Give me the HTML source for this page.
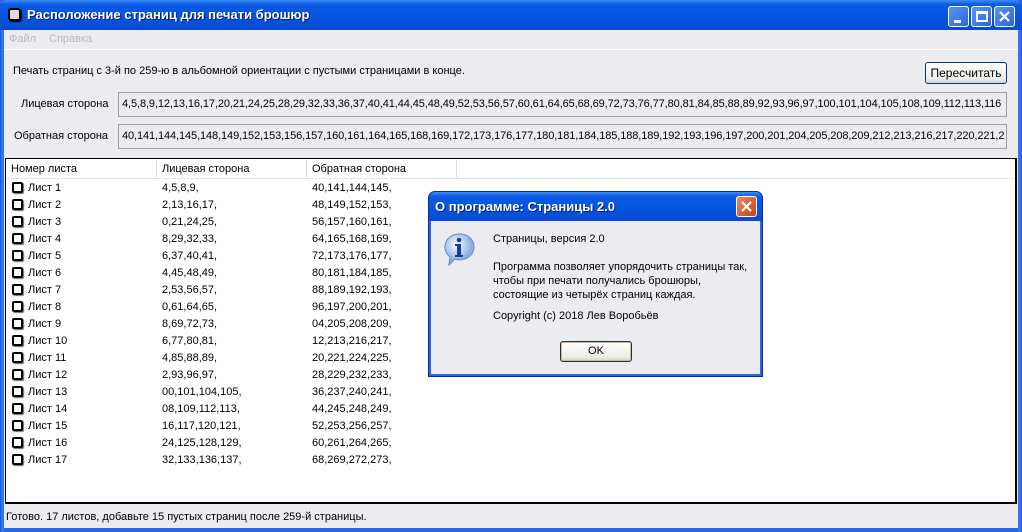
<!DOCTYPE html>
<html><head><meta charset="utf-8"><style>
*{margin:0;padding:0;box-sizing:border-box}
body{width:1022px;height:532px;overflow:hidden;font-family:"Liberation Sans",sans-serif;font-size:11px;color:#000;background:#2a66e0;position:relative}
.win{position:absolute;left:0;top:0;width:1022px;height:532px;background:linear-gradient(90deg,#1650d8,#3a7cf0 2px,#2a66e0 5px,#2a66e0 calc(100% - 5px),#3a7cf0 calc(100% - 2px),#1650d8);border-radius:7px 7px 0 0}
.title{position:absolute;left:0;top:0;width:1022px;height:30px;background:linear-gradient(#3d8cf5 0%,#0a5ae4 15%,#0554e0 60%,#0a4ad0 100%);border-radius:7px 7px 0 0}
.title span{position:absolute;left:27px;top:7px;color:#fff;font-weight:bold;font-size:13px;text-shadow:1px 1px #0a1e6a}
.ticon{position:absolute;left:8px;top:8px;width:13px;height:13px;border:2px solid #000;border-radius:3px;background:#ddd;box-shadow:1px 1px 1px #000}
.tb{position:absolute;top:6px;width:21px;height:21px;border:1px solid #fff;border-radius:3px;background:linear-gradient(135deg,#5a94f8,#2a64e0)}
.client{position:absolute;left:4px;top:30px;width:1014px;height:498px;background:#ecebf0}
.abs{position:absolute}
.field{position:absolute;left:114px;width:889px;height:25px;border:1px solid #a0a0a0;background:#ecebf0;padding:5px 3px;font-size:11px;letter-spacing:-0.1px;white-space:nowrap;overflow:hidden}
.list{position:absolute;left:1px;top:128px;width:1012px;height:346px;border:1px solid #000;border-width:1px 2px 2px 1px;background:#fff}
.hdr{position:absolute;top:0;height:20px;border-bottom:1px solid #e2e2e2;width:100%}
.hc{position:absolute;top:4px}
.sep{position:absolute;top:1px;width:1px;height:18px;background:#ddd}
.row{position:absolute;left:0;height:17px;width:500px}
.cb{position:absolute;left:6px;top:2px;width:11px;height:11px;border:2px solid #000;border-radius:2px;box-shadow:1px 1px 1px #666;background:#fff}
.dlg{position:absolute;left:428px;top:191px;width:335px;height:186px;background:#2a66e0;border:1px solid #0a2a9a;border-radius:7px 7px 0 0}
.dlg .dtb{position:absolute;left:0;top:0;width:333px;height:29px;background:linear-gradient(#3d8cf5 0%,#0a5ae4 15%,#0554e0 60%,#0a4ad0 100%);border-radius:6px 6px 0 0}
.dlg .dt{position:absolute;left:6px;top:7px;color:#fff;font-weight:bold;font-size:13px;text-shadow:1px 1px #0a1e6a}
.dlg .dc{position:absolute;left:2px;top:29px;width:329px;height:153px;background:#ecebf0}
.btn{position:absolute;border:1px solid #003c74;border-radius:3px;background:linear-gradient(#fff,#ecebe6 80%,#d6d0c5);text-align:center;font-size:11px}
</style></head><body>
<div class="win">
<div class="title"><div class="ticon"></div><span>Расположение страниц для печати брошюр</span>
<div class="tb" style="left:948px"><div style="position:absolute;left:5px;top:13px;width:7px;height:3px;background:#fff"></div></div>
<div class="tb" style="left:971px"><div style="position:absolute;left:4px;top:4px;width:12px;height:11px;border:2px solid #fff;border-top-width:3px"></div></div>
<div class="tb" style="left:994px"><svg width="19" height="19" style="position:absolute;left:0;top:0"><path d="M5 5L14 14M14 5L5 14" stroke="#fff" stroke-width="2.2"/></svg></div>
</div>
<div class="client">
<div class="abs" style="left:5px;top:3px;color:#b8b8c0;font-size:11px">Файл</div>
<div class="abs" style="left:45px;top:3px;color:#b8b8c0;font-size:11px">Справка</div>
<div class="abs" style="left:0;top:19px;width:1014px;height:1px;background:#fff"></div>
<div class="abs" style="left:9px;top:35px;font-size:11px">Печать страниц с 3-й по 259-ю в альбомной ориентации с пустыми страницами в конце.</div>
<div class="btn" style="left:921px;top:32px;width:82px;height:22px;line-height:20px;font-size:12px">Пересчитать</div>
<div class="abs" style="left:17px;top:68px;font-size:11px">Лицевая сторона</div>
<div class="field" style="top:62px">4,5,8,9,12,13,16,17,20,21,24,25,28,29,32,33,36,37,40,41,44,45,48,49,52,53,56,57,60,61,64,65,68,69,72,73,76,77,80,81,84,85,88,89,92,93,96,97,100,101,104,105,108,109,112,113,116</div>
<div class="abs" style="left:10px;top:100px;font-size:11px">Обратная сторона</div>
<div class="field" style="top:94px">40,141,144,145,148,149,152,153,156,157,160,161,164,165,168,169,172,173,176,177,180,181,184,185,188,189,192,193,196,197,200,201,204,205,208,209,212,213,216,217,220,221,2</div>
<div class="list">
<div class="hdr"><div class="hc" style="left:5px">Номер листа</div><div class="sep" style="left:150px"></div><div class="hc" style="left:156px">Лицевая сторона</div><div class="sep" style="left:300px"></div><div class="hc" style="left:306px">Обратная сторона</div><div class="sep" style="left:450px"></div></div>
<div id="rows"></div>
</div>
<div class="abs" style="left:2px;top:481px;font-size:11px">Готово. 17 листов, добавьте 15 пустых страниц после 259-й страницы.</div>
</div>
</div>
<div class="dlg"><div class="dtb"></div><div class="dt">О программе: Страницы 2.0</div>
<div style="position:absolute;left:307px;top:4px;width:21px;height:21px;border:1px solid #fff;border-radius:3px;background:linear-gradient(135deg,#e88a6a,#c8401a)"><svg width="19" height="19"><path d="M5 5L14 14M14 5L5 14" stroke="#fff" stroke-width="2.2"/></svg></div>
<div class="dc">
<svg width="40" height="40" style="position:absolute;left:11px;top:10px"><defs><radialGradient id="g" cx="40%" cy="35%"><stop offset="0" stop-color="#fff"/><stop offset="1" stop-color="#8ab0e0"/></radialGradient></defs><path d="M16 3a14 13 0 1 1-3 25l-6 6 1-8A14 13 0 0 1 16 3z" fill="url(#g)" stroke="#6a8ac0"/><circle cx="17" cy="9" r="2.3" fill="#1a3a9a"/><path d="M13 13h6v11h2v2h-8v-2h2v-9h-2z" fill="#1a3a9a"/></svg>
<div class="abs" style="left:62px;top:12px;font-size:11px">Страницы, версия 2.0</div>
<div class="abs" style="left:62px;top:39px;font-size:11px;line-height:14px">Программа позволяет упорядочить страницы так,<br>чтобы при печати получались брошюры,<br>состоящие из четырёх страниц каждая.</div>
<div class="abs" style="left:62px;top:89px;font-size:11px">Copyright (c) 2018 Лев Воробьёв</div>
<div class="btn" style="left:129px;top:120px;width:72px;height:21px;line-height:19px;box-shadow:inset 0 0 0 1px #f0b060">OK</div>
</div></div>
<script>
var f=["4,5,8,9,","2,13,16,17,","0,21,24,25,","8,29,32,33,","6,37,40,41,","4,45,48,49,","2,53,56,57,","0,61,64,65,","8,69,72,73,","6,77,80,81,","4,85,88,89,","2,93,96,97,","00,101,104,105,","08,109,112,113,","16,117,120,121,","24,125,128,129,","32,133,136,137,"];
var b=["40,141,144,145,","48,149,152,153,","56,157,160,161,","64,165,168,169,","72,173,176,177,","80,181,184,185,","88,189,192,193,","96,197,200,201,","04,205,208,209,","12,213,216,217,","20,221,224,225,","28,229,232,233,","36,237,240,241,","44,245,248,249,","52,253,256,257,","60,261,264,265,","68,269,272,273,"];
var h="";for(var i=0;i<17;i++){h+='<div class="row" style="top:'+(21+i*17)+'px"><div class="cb"></div><div style="position:absolute;left:22px;top:2px">Лист '+(i+1)+'</div><div style="position:absolute;left:156px;top:2px">'+f[i]+'</div><div style="position:absolute;left:306px;top:2px">'+b[i]+'</div></div>';}
document.getElementById("rows").innerHTML=h;
</script>
</body></html>
